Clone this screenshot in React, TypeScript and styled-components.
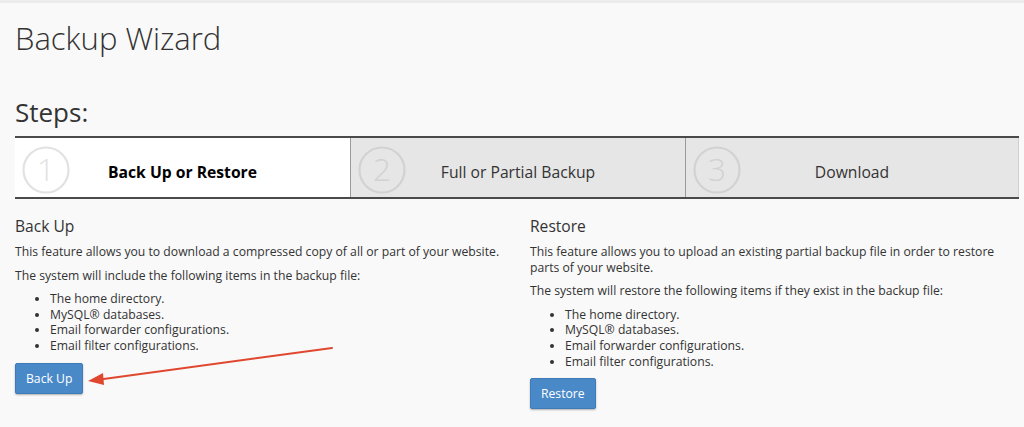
import React from "react";
import styled, { createGlobalStyle } from "styled-components";

const Global = createGlobalStyle`
  html, body { margin: 0; padding: 0; background: #f9f9f9; }
  body { font-family: "Open Sans", "Liberation Sans", sans-serif; color: #333; }
  * { box-sizing: border-box; }
`;

const Page = styled.div`
  position: relative;
  width: 1024px;
  height: 427px;
  overflow: hidden;
  background: #f9f9f9;
  border-top: 3px solid #ececec;
  padding: 17px 5px 0 15px;
`;

const Title = styled.h1`
  margin: 0;
  font-size: 31px;
  line-height: 36px;
  font-weight: 300;
  color: #333;
`;

const StepsHeading = styled.h2`
  margin: 41px 0 0;
  font-size: 26px;
  line-height: 30px;
  font-weight: 400;
  color: #333;
`;

const StepsBar = styled.div`
  margin-top: 9px;
  display: grid;
  grid-template-columns: 335px 335px 1fr;
  border-top: 2px solid #4a4a4a;
  border-bottom: 2px solid #4a4a4a;
  height: 63px;
`;

const Step = styled.div<{ $active?: boolean }>`
  position: relative;
  display: flex;
  align-items: center;
  justify-content: center;
  background: ${(p) => (p.$active ? "#ffffff" : "#e6e6e6")};
  border-left: ${(p) => (p.$active ? "none" : "1px solid #9a9a9a")};
  &:last-child { border-right: 1px solid #d0d0d0; }
`;

const StepNum = styled.svg`
  position: absolute;
  left: 6px;
  top: 7px;
`;

const StepLabel = styled.span<{ $active?: boolean }>`
  font-size: 15.7px;
  font-weight: ${(p) => (p.$active ? 700 : 400)};
  color: ${(p) => (p.$active ? "#000" : "#333")};
  padding-top: 9px;
`;

const Columns = styled.div`
  display: grid;
  grid-template-columns: 500px 1fr;
  column-gap: 15px;
  margin-top: 16px;
`;

const Col = styled.div``;

const SectionTitle = styled.h3`
  margin: 0;
  font-size: 15.6px;
  line-height: 22px;
  font-weight: 400;
  color: #333;
`;

const Para = styled.p`
  margin: 7px 0 0;
  font-size: 12.2px;
  line-height: 15.5px;
  color: #333;
  & + & { margin-top: 8px; }
`;

const List = styled.ul`
  margin: 8px 0 0;
  padding-left: 35px;
  font-size: 12.2px;
  line-height: 15.7px;
  color: #333;
`;

const Button = styled.button`
  margin-top: 9px;
  display: inline-block;
  font-family: inherit;
  font-size: 12.2px;
  line-height: 17px;
  color: #fff;
  background: #4a89c8;
  border: 1px solid #3f7bb8;
  border-radius: 2px;
  padding: 6px 10px;
  box-shadow: 0 1px 2px rgba(0, 0, 0, 0.3);
`;

const Arrow = styled.svg`
  position: absolute;
  left: 0;
  top: 0;
  pointer-events: none;
`;

const Circle = ({ n, active }: { n: number; active?: boolean }) => {
  const c = active ? "#e2e2e2" : "#d2d2d2";
  return (
    <StepNum width="50" height="50" viewBox="0 0 50 50">
      <circle cx="25" cy="25" r="22.5" fill="none" stroke={c} strokeWidth="2.2" />
      <text
        x="25"
        y="36"
        textAnchor="middle"
        fontFamily="'Open Sans', sans-serif"
        fontWeight={300}
        fontSize="32"
        fill={c}
      >
        {n}
      </text>
    </StepNum>
  );
};

const items = [
  "The home directory.",
  "MySQL® databases.",
  "Email forwarder configurations.",
  "Email filter configurations.",
];

export default function App() {
  return (
    <>
      <Global />
      <Page>
        <Title>Backup Wizard</Title>
        <StepsHeading>Steps:</StepsHeading>
        <StepsBar>
          <Step $active>
            <Circle n={1} active />
            <StepLabel $active>Back Up or Restore</StepLabel>
          </Step>
          <Step>
            <Circle n={2} />
            <StepLabel>Full or Partial Backup</StepLabel>
          </Step>
          <Step>
            <Circle n={3} />
            <StepLabel>Download</StepLabel>
          </Step>
        </StepsBar>
        <Columns>
          <Col>
            <SectionTitle>Back Up</SectionTitle>
            <Para>This feature allows you to download a compressed copy of all or part of your website.</Para>
            <Para>The system will include the following items in the backup file:</Para>
            <List>
              {items.map((t) => (
                <li key={t}>{t}</li>
              ))}
            </List>
            <Button>Back Up</Button>
          </Col>
          <Col>
            <SectionTitle>Restore</SectionTitle>
            <Para>
              This feature allows you to upload an existing partial backup file in order to restore parts of your website.
            </Para>
            <Para>The system will restore the following items if they exist in the backup file:</Para>
            <List>
              {items.map((t) => (
                <li key={t}>{t}</li>
              ))}
            </List>
            <Button>Restore</Button>
          </Col>
        </Columns>
        <Arrow width="1024" height="427" viewBox="0 0 1024 427">
          <line x1="332" y1="345" x2="100" y2="376.5" stroke="#e0472f" strokeWidth="2" strokeLinecap="round" />
          <polygon points="88,378 103,370 104,382" fill="#e0472f" />
        </Arrow>
      </Page>
    </>
  );
}
